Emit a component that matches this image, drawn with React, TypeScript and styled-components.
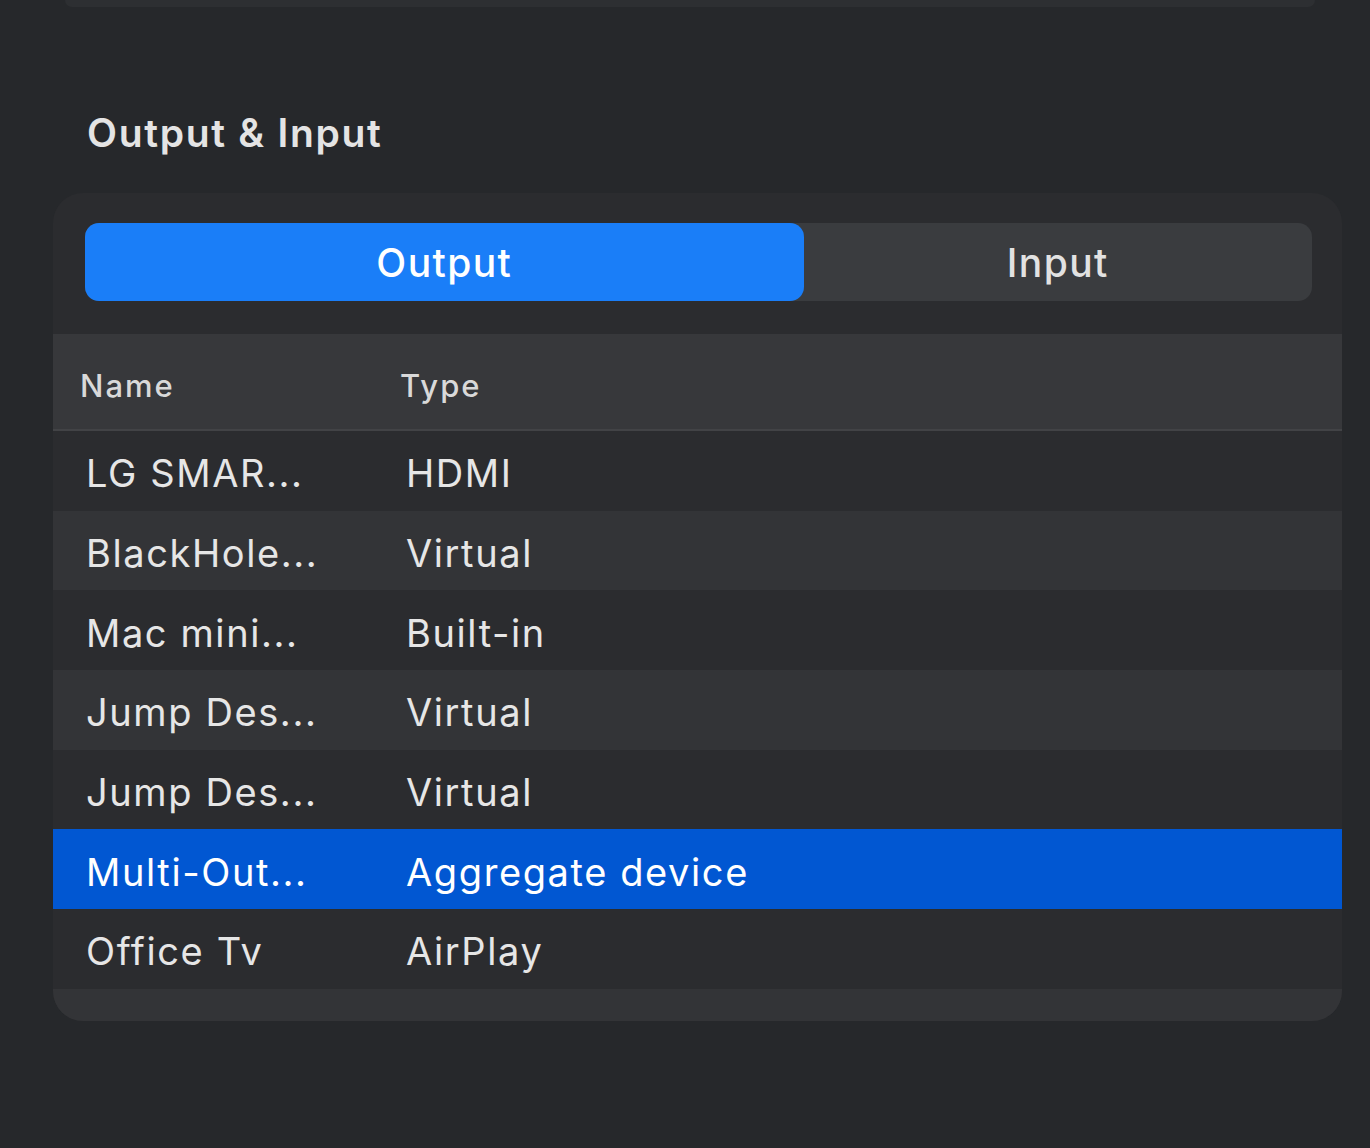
import React from "react";
import styled, { createGlobalStyle } from "styled-components";

const Global = createGlobalStyle`
  html, body { margin: 0; padding: 0; background: #26282b; }
  body { font-family: Inter, "Noto Sans", "Liberation Sans", sans-serif; -webkit-font-smoothing: antialiased; }
`;

const Page = styled.div`
  width: 1370px;
  height: 1148px;
  background: #26282b;
  overflow: hidden;
  display: flex;
  flex-direction: column;
`;

const TopCardEdge = styled.div`
  flex: none;
  height: 7px;
  margin: 0 55px 0 65px;
  background: #2d2f32;
  border-radius: 0 0 24px 24px;
`;

const Title = styled.h2`
  flex: none;
  margin: 102px 0 0 87px;
  font-size: 39px;
  line-height: 48px;
  font-weight: 600;
  color: #e4e4e4;
  letter-spacing: 1.7px;
`;

const Card = styled.div`
  flex: none;
  margin: 36px 28px 0 53px;
  height: 828px;
  background: #2b2c2f;
  border-radius: 30px;
  overflow: hidden;
  display: flex;
  flex-direction: column;
  padding-top: 30px;
  box-sizing: border-box;
`;

const Segmented = styled.div`
  flex: none;
  margin: 0 30px 0 32px;
  height: 78px;
  background: #3a3c3f;
  border-radius: 14px;
  display: flex;
`;

const Segment = styled.div<{ $active?: boolean; $grow: number }>`
  flex: ${(p) => p.$grow};
  display: flex;
  align-items: center;
  justify-content: center;
  border-radius: 14px;
  background: ${(p) => (p.$active ? "#1a7ef8" : "transparent")};
  color: ${(p) => (p.$active ? "#ffffff" : "#e2e2e2")};
  font-size: 39px;
  font-weight: 500;
  letter-spacing: 1.4px;
`;

const Table = styled.div`
  flex: none;
  margin-top: 33px;
  display: flex;
  flex-direction: column;
`;

const HeaderRow = styled.div`
  flex: none;
  height: 97px;
  box-sizing: border-box;
  padding: 8px 0 0 27px;
  background: #37383b;
  border-bottom: 2px solid #424346;
  display: grid;
  grid-template-columns: 320px 1fr;
  align-items: center;
  color: #d9d9d9;
  font-size: 31px;
  font-weight: 500;
  letter-spacing: 2px;
`;

const Row = styled.div<{ $variant: "plain" | "alt" | "selected" }>`
  height: 79.7px;
  box-sizing: border-box;
  padding: 5px 0 0 33px;
  flex: none;
  display: grid;
  grid-template-columns: 320px 1fr;
  align-items: center;
  font-size: 38px;
  letter-spacing: 1.6px;
  color: ${(p) => (p.$variant === "selected" ? "#ffffff" : "#e6e6e6")};
  background: ${(p) =>
    p.$variant === "selected" ? "#0157d2" : p.$variant === "alt" ? "#333437" : "#2b2c2f"};
`;

const rows = [
  ["LG SMAR...", "HDMI"],
  ["BlackHole...", "Virtual"],
  ["Mac mini...", "Built-in"],
  ["Jump Des...", "Virtual"],
  ["Jump Des...", "Virtual"],
  ["Multi-Out...", "Aggregate device"],
  ["Office Tv", "AirPlay"],
];

export default function App() {
  return (
    <Page>
      <Global />
      <TopCardEdge />
      <Title>Output &amp; Input</Title>
      <Card>
        <Segmented>
          <Segment $active $grow={718}>Output</Segment>
          <Segment $grow={508}>Input</Segment>
        </Segmented>
        <Table>
          <HeaderRow>
            <span>Name</span>
            <span>Type</span>
          </HeaderRow>
          {rows.map(([name, type], i) => (
            <Row key={i} $variant={i === 5 ? "selected" : i % 2 === 1 ? "alt" : "plain"}>
              <span>{name}</span>
              <span>{type}</span>
            </Row>
          ))}
          <Row $variant="alt" />
        </Table>
      </Card>
    </Page>
  );
}
